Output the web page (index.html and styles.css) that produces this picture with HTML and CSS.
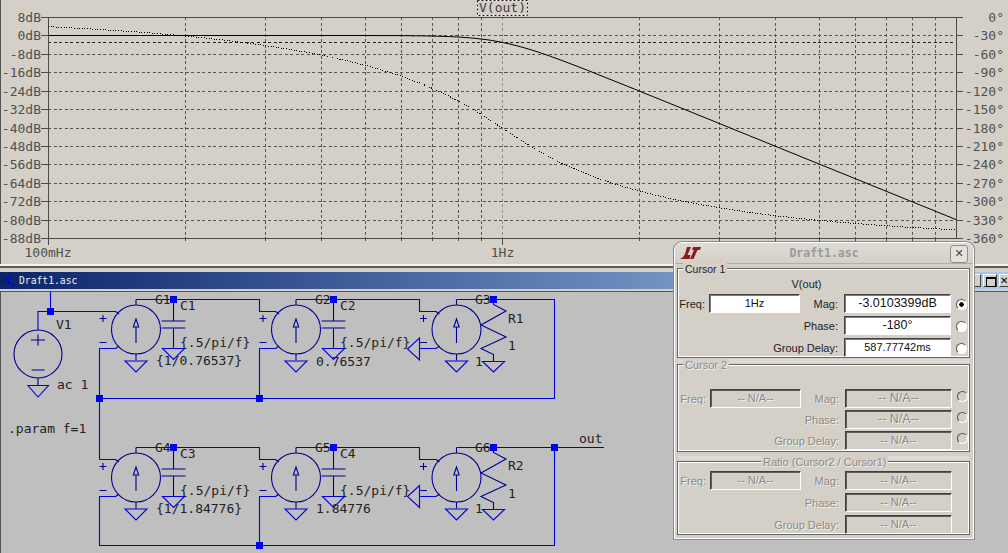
FILE: index.html
```html
<!DOCTYPE html>
<html lang="en">
<head>
<meta charset="utf-8">
<title>LTspice - Draft1.asc</title>
<link rel="stylesheet" href="styles.css">
<script src="plot.js" defer></script>
</head>
<body>
<main class="desktop">
  <section class="plot-pane">
    <svg class="pane-svg" width="1008" height="264" viewBox="0 0 1008 264">
      <path class="grid" d="M48 54.5H955M48 72.5H955M48 91.5H955M48 109.5H955M48 128.5H955M48 146.5H955M48 164.5H955M48 183.5H955M48 201.5H955M48 220.5H955M48 35.5H955"/>
      <path class="grid-cursor" d="M48 42.5H955"/>
      <path class="grid" d="M185.5 17V238M265.5 17V238M321.5 17V238M365.5 17V238M401.5 17V238M432.5 17V238M458.5 17V238M481.5 17V238M639.5 17V238M719.5 17V238M775.5 17V238M819.5 17V238M855.5 17V238M886.5 17V238M912.5 17V238M935.5 17V238"/>
      <path class="grid-light" d="M502.5 17V238"/>
      <path class="axis" d="M41 17.5H963M48.5 17V245M956.5 17V239M48 238.5H957M502.5 238V245M185.5 238V241M265.5 238V241M321.5 238V241M365.5 238V241M401.5 238V241M432.5 238V241M458.5 238V241M481.5 238V241M639.5 238V241M719.5 238V241M775.5 238V241M819.5 238V241M855.5 238V241M886.5 238V241M912.5 238V241M935.5 238V241"/>
      <path class="axis" d="M41 35.5H48M41 54.5H48M41 72.5H48M41 91.5H48M41 109.5H48M41 128.5H48M41 146.5H48M41 164.5H48M41 183.5H48M41 201.5H48M41 220.5H48M41 238.5H48M957 35.5H963M957 54.5H963M957 72.5H963M957 91.5H963M957 109.5H963M957 128.5H963M957 146.5H963M957 164.5H963M957 183.5H963M957 201.5H963M957 220.5H963M957 238.5H963"/>
      <path id="trace-phase" class="trace-phase" d=""/>
      <path id="trace-mag" class="trace-mag" d=""/>
      <g class="axis-left">
        <text x="41" y="22">8dB</text><text x="41" y="40">0dB</text><text x="41" y="59">-8dB</text><text x="41" y="77">-16dB</text><text x="41" y="96">-24dB</text><text x="41" y="114">-32dB</text><text x="41" y="133">-40dB</text><text x="41" y="151">-48dB</text><text x="41" y="169">-56dB</text><text x="41" y="188">-64dB</text><text x="41" y="206">-72dB</text><text x="41" y="225">-80dB</text><text x="41" y="243">-88dB</text>
      </g>
      <g class="axis-right">
        <text x="1004" y="22">0°</text><text x="1004" y="40">-30°</text><text x="1004" y="59">-60°</text><text x="1004" y="77">-90°</text><text x="1004" y="96">-120°</text><text x="1004" y="114">-150°</text><text x="1004" y="133">-180°</text><text x="1004" y="151">-210°</text><text x="1004" y="169">-240°</text><text x="1004" y="188">-270°</text><text x="1004" y="206">-300°</text><text x="1004" y="225">-330°</text><text x="1004" y="243">-360°</text>
      </g>
      <g class="axis-bottom">
        <text x="48" y="257">100mHz</text><text x="502.5" y="257">1Hz</text>
      </g>
      <rect class="title-box" x="477.5" y="0.5" width="50" height="15"/>
      <rect class="title-dots" x="477.5" y="0.5" width="50" height="15"/>
      <text class="plot-title" x="502.5" y="12">V(out)</text>
    </svg>
  </section>

  <div class="mdi-sep"></div>

  <header class="mdi-title">
    <svg class="mdi-icon" width="14" height="18" viewBox="0 0 14 18">
      <path class="mdi-icon-line" d="M10 1L6 6V14M1 9H6M6 9L12 5M6 11L12 15"/>
      <path class="mdi-icon-arrow" d="M9 14l4 2l-1-3z"/>
    </svg>
    <span class="mdi-name">Draft1.asc</span>
    <div class="mdi-buttons">
      <span class="mdi-btn"></span>
      <span class="mdi-btn mdi-btn-restore"></span>
      <span class="mdi-btn mdi-btn-close">✕</span>
    </div>
  </header>
  <div class="mdi-gap"></div>

  <section class="schematic">
    <svg class="pane-svg" width="1008" height="262" viewBox="0 291 1008 262">
      <defs>
        <g id="stage">
          <circle class="sym" cx="0" cy="30" r="24.5"/>
          <path class="sym" d="M0 0V5.5M0 54.5V61M0 43.5V27.5M-2.7 27.5L0 19.5L2.7 27.5ZM-20.5 12L-17 14.5M-20.5 49L-17 46.5M-36.5 19H-29.5M-33 15.5V22.5M-36.5 43H-29.5"/>
          <path class="wire" d="M-11 61.5H11L0 72.5Z"/>
        </g>
        <g id="cap">
          <path class="sym" d="M0 0V21.5M-12 21.5H12M-12 28.5H12M0 28.5V49"/>
          <path class="wire" d="M-11 49H11L0 60Z"/>
        </g>
        <g id="res">
          <path class="sym" d="M0 0V5L12.5 11.5L-12.5 25.5L12.5 37.5L-12.5 49L0 55V62"/>
          <path class="wire" d="M-11 62H11L0 72.5Z"/>
        </g>
        <path id="gnd-left" class="wire" d="M0 -11V11L-12 0Z"/>
        <rect id="dot" class="junction" x="-3.5" y="-3.5" width="7" height="7"/>
      </defs>

      <path class="wire" d="M50.5 292V311.5M38 330V311.5H116M136 299.5H259.5V311.5H276M99.5 459.5V348.5H116M259.5 398.5V348.5H276M99.5 398.5H554.5V299.5H456.5M296 299.5H419.5V311.5H436M419.5 348.5H436"/>
      <path class="wire" d="M136 447.5H259.5V459.5H276M296 447.5H419.5V459.5H436M456.5 447.5H604M554.5 447.5V545.5H99.5V496.5H116M259.5 545.5V496.5H276M419.5 496.5H436M99.5 459.5H116"/>

      <circle class="sym" cx="38" cy="354" r="24"/>
      <path class="sym" d="M31 340H45M38 334.5V345.5M31.5 370H44.5M38 378V385"/>
      <path class="wire" d="M28 385.5H48.5L38 397Z"/>

      <use href="#stage" x="136" y="299.5"/><use href="#stage" x="296" y="299.5"/><use href="#stage" x="456.5" y="299.5"/>
      <use href="#stage" x="136" y="447.5"/><use href="#stage" x="296" y="447.5"/><use href="#stage" x="456.5" y="447.5"/>
      <use href="#cap" x="173.5" y="299.5"/><use href="#cap" x="333.5" y="299.5"/>
      <use href="#cap" x="173.5" y="447.5"/><use href="#cap" x="333.5" y="447.5"/>
      <use href="#res" x="493.5" y="299.5"/><use href="#res" x="493.5" y="447.5"/>
      <use href="#gnd-left" x="419.5" y="349"/><use href="#gnd-left" x="419.5" y="496.5"/>

      <use href="#dot" x="50.5" y="311.5"/><use href="#dot" x="173.5" y="299.5"/><use href="#dot" x="333.5" y="299.5"/><use href="#dot" x="493.5" y="299.5"/>
      <use href="#dot" x="99.5" y="398.5"/><use href="#dot" x="259.5" y="398.5"/>
      <use href="#dot" x="173.5" y="447.5"/><use href="#dot" x="333.5" y="447.5"/><use href="#dot" x="493.5" y="447.5"/><use href="#dot" x="554.5" y="447.5"/>
      <use href="#dot" x="259.5" y="545.5"/>

      <g class="net-label">
        <text x="56" y="329">V1</text><text x="57" y="389">ac 1</text><text x="8" y="433">.param f=1</text>
        <text x="155" y="304">G1</text><text x="180" y="310">C1</text><text x="180" y="347">{.5/pi/f}</text><text x="156" y="365">{1/0.76537}</text>
        <text x="315" y="304">G2</text><text x="340" y="310">C2</text><text x="340" y="347">{.5/pi/f}</text><text x="316" y="366">0.76537</text>
        <text x="475" y="304">G3</text><text x="508" y="323">R1</text><text x="508" y="350">1</text><text x="475" y="366">1</text>
        <text x="155" y="452">G4</text><text x="180" y="458">C3</text><text x="180" y="495">{.5/pi/f}</text><text x="156" y="513">{1/1.84776}</text>
        <text x="315" y="452">G5</text><text x="340" y="458">C4</text><text x="340" y="495">{.5/pi/f}</text><text x="316" y="513">1.84776</text>
        <text x="475" y="452">G6</text><text x="508" y="470">R2</text><text x="508" y="498">1</text><text x="475" y="513">1</text>
        <text x="579" y="443">out</text>
      </g>
    </svg>
  </section>

  <aside class="dialog">
    <div class="dialog-title">
      <svg class="dialog-logo" width="22" height="14" viewBox="0 0 22 14">
        <path class="logo-shape" d="M7 1h4l-3.5 8h3l-1 4H0c2.5-1 4-3 5-5zM13 1h8l-1 3h-2.5l-4 9h-3.5l4-9H12z"/>
      </svg>
      <span class="dialog-name">Draft1.asc</span>
      <span class="dialog-close">✕</span>
    </div>

    <div class="group group-c1">
      <span class="legend legend-left">Cursor 1</span>
      <div class="trace-name">V(out)</div>
      <div class="rows">
        <span class="lbl lbl-freq">Freq:</span><div class="field">1Hz</div><span class="lbl lbl-mag">Mag:</span><div class="field field-lg">-3.0103399dB</div><span class="radio radio-on"></span>
        <span class="lbl lbl-wide">Phase:</span><div class="field field-lg">-180°</div><span class="radio radio-live"></span>
        <span class="lbl lbl-wide">Group Delay:</span><div class="field">587.77742ms</div><span class="radio radio-live"></span>
      </div>
    </div>

    <div class="group group-c2 off">
      <span class="legend legend-left">Cursor 2</span>
      <div class="rows rows-tight">
        <span class="lbl lbl-freq">Freq:</span><div class="field">-- N/A--</div><span class="lbl lbl-mag">Mag:</span><div class="field field-lg">-- N/A--</div><span class="radio"></span>
        <span class="lbl lbl-wide">Phase:</span><div class="field field-lg">-- N/A--</div><span class="radio"></span>
        <span class="lbl lbl-wide">Group Delay:</span><div class="field">-- N/A--</div><span class="radio"></span>
      </div>
    </div>

    <div class="group group-ratio off">
      <span class="legend legend-ratio">Ratio (Cursor2 / Cursor1)</span>
      <div class="rows">
        <span class="lbl lbl-freq">Freq:</span><div class="field">-- N/A--</div><span class="lbl lbl-mag">Mag:</span><div class="field">-- N/A--</div><span class="radio-none"></span>
        <span class="lbl lbl-wide">Phase:</span><div class="field">-- N/A--</div><span class="radio-none"></span>
        <span class="lbl lbl-wide">Group Delay:</span><div class="field">-- N/A--</div><span class="radio-none"></span>
      </div>
    </div>
  </aside>
</main>
</body>
</html>
```
FILE: styles.css
```css
* { box-sizing: border-box; }
html, body { margin: 0; padding: 0; }
body { width: 1008px; height: 553px; overflow: hidden; background: #bfbfbf; }

.desktop {
  position: relative;
  width: 1008px;
  height: 553px;
  overflow: hidden;
  display: flex;
  flex-direction: column;
  background: #bfbfbf;
}
.pane-svg { display: block; }

/* Plot pane */
.plot-pane { height: 264px; background: #d4d0c8; box-shadow: inset 1px 0 0 #555; }
.grid, .grid-cursor, .grid-light, .axis, .trace-phase { fill: none; shape-rendering: crispEdges; }
.grid { stroke: #555; stroke-width: 1; stroke-dasharray: 3 2.5; }
.grid-cursor { stroke: #222; stroke-width: 1; stroke-dasharray: 3 2.5; }
.grid-light { stroke: #8f8d88; stroke-width: 1; stroke-dasharray: 3 2.5; }
.axis { stroke: #4a4a4a; stroke-width: 1; }
.trace-mag { fill: none; stroke: #000; stroke-width: 1; }
.trace-phase { stroke: #000; stroke-width: 1; stroke-dasharray: 1 1.6; }
.axis-left text, .axis-right text, .axis-bottom text, .plot-title {
  font-family: "DejaVu Sans Mono", monospace;
  font-size: 13px;
  fill: #505050;
}
.axis-left text, .axis-right text { text-anchor: end; }
.axis-bottom text, .plot-title { text-anchor: middle; }
.plot-title { fill: #3c3c3c; }
.title-box { fill: #d4d0c8; stroke: #fff; stroke-width: 1; }
.title-dots { fill: none; stroke: #111; stroke-width: 1; stroke-dasharray: 2 2; }

/* MDI child frame */
.mdi-sep {
  height: 8px;
  background: #d4d0c8;
  border-top: 1px solid #f4f3f0;
  box-shadow: inset 0 2px 0 -0.5px #f4f3f0;
  position: relative;
}
.mdi-sep::after {
  content: "";
  display: block;
  height: 2px;
  margin-top: 1px;
  background: #5c5c5c;
}
.mdi-title {
  height: 17px;
  display: flex;
  align-items: center;
  background: linear-gradient(90deg, #0a246a 0%, #a6caf0 100%);
  position: relative;
}
.mdi-icon { margin-left: 2px; flex: none; position: relative; top: -1px; }
.mdi-icon-line { fill: none; stroke: #0000e0; stroke-width: 1; }
.mdi-icon-arrow { fill: #0000e0; }
.mdi-name {
  margin-left: 3px;
  font-family: "DejaVu Sans Mono", monospace;
  font-size: 9.7px;
  color: #f0f0f0;
}
.mdi-buttons { margin-left: auto; margin-right: -5px; display: flex; gap: 2px; }
.mdi-btn {
  width: 14px;
  height: 13px;
  background: #d4d0c8;
  border: 1px solid;
  border-color: #fff #404040 #404040 #fff;
  position: relative;
  font: 10px/11px "DejaVu Sans", sans-serif;
  color: #000;
  text-align: center;
}
.mdi-btn-restore::after {
  content: "";
  position: absolute;
  left: 2px; top: 2px;
  width: 8px; height: 7px;
  border: 1px solid #000;
  border-top-width: 2px;
}
.mdi-btn-close { font-weight: bold; text-align: left; }
.mdi-gap { height: 2px; background: #d4d0c8; }

/* Schematic */
.schematic { flex: 1; background: #bfbfbf; box-shadow: inset 1px 1px 0 #555; }
.wire { fill: none; stroke: #0000e0; stroke-width: 1.1; }
.sym { fill: none; stroke: #000090; stroke-width: 1.1; }
.junction { fill: #0000f0; }
.net-label text {
  font-family: "DejaVu Sans Mono", monospace;
  font-size: 13px;
  fill: #222;
}

/* Cursor dialog */
.dialog {
  position: absolute;
  left: 674px;
  top: 242px;
  width: 300px;
  height: 297px;
  background: #d4d0c8;
  border: 1px solid #fff;
  border-radius: 8px 8px 0 0;
  box-shadow: 0 0 0 1px #8a8a88;
  font-family: "Liberation Sans", Arial, sans-serif;
  font-size: 11px;
  color: #222;
  padding: 0 2px;
}
.dialog-title {
  height: 21px;
  margin: 0 -2px 4px;
  padding: 0 5px;
  display: flex;
  align-items: center;
  position: relative;
  border-bottom: 1px solid #b0aea8;
  border-radius: 8px 8px 0 0;
  background: linear-gradient(180deg, #dedbd5, #d4d0c8);
}
.dialog-logo { flex: none; }
.logo-shape { fill: #8e1a1a; }
.dialog-name {
  position: absolute;
  left: 0; right: 0;
  text-align: center;
  font-family: "DejaVu Sans Mono", monospace;
  font-weight: bold;
  font-size: 11.5px;
  color: #9a9a9a;
}
.dialog-close {
  position: absolute;
  right: 5px;
  top: 2px;
  width: 18px;
  height: 18px;
  background: #e4e2dd;
  border: 1px solid #8f8d88;
  border-radius: 3px;
  font: bold 11px/16px "DejaVu Sans", sans-serif;
  color: #444;
  text-align: center;
}

.group {
  position: relative;
  width: 293px;
  border: 1px solid #666;
  box-shadow: inset 0 0 0 1px #fff;
}
.group + .group::before {
  content: "";
  position: absolute;
  left: 0; right: 0;
  top: -6px;
  height: 4px;
  background: #dedbd5;
}
.group-c1 { height: 90px; padding-top: 9px; }
.group-c2 { height: 88px; margin-top: 6px; padding-top: 24px; padding-left: 1px; }
.group-ratio { height: 74px; margin-top: 9px; padding-top: 9px; padding-left: 1px; }
.legend {
  position: absolute;
  top: -6px;
  background: #d4d0c8;
  padding: 0 2px;
  line-height: 12px;
  white-space: nowrap;
}
.legend-left { left: 5px; }
.group-c1 .legend { font-size: 10.5px; }
.legend-ratio { left: 83px; }
.trace-name { height: 16px; line-height: 13px; text-align: center; padding-right: 34px; }

.rows {
  display: grid;
  grid-template-columns: 31px 91px 44px 107px 18px;
  grid-auto-rows: 19px;
  row-gap: 3px;
}
.rows-tight { row-gap: 2px; }
.lbl { text-align: right; line-height: 21px; white-space: nowrap; }
.lbl-freq { padding-right: 4px; }
.lbl-mag { padding-right: 6px; }
.lbl-wide { grid-column: 1 / span 3; padding-right: 6px; }
.field {
  background: #fff;
  border: 1px solid;
  border-color: #404040 #fff #fff #404040;
  box-shadow: inset 1px 1px 0 #808080;
  text-align: center;
  line-height: 16px;
  font-size: 11px;
  color: #111;
}
.field-lg { font-size: 12.5px; }
.radio {
  justify-self: end;
  align-self: center;
  width: 11px;
  height: 11px;
  margin-right: 2px;
  border-radius: 50%;
  border: 1.5px solid;
  border-color: #555 #fff #fff #555;
}
.group-c1 .radio { margin-top: 2px; }
.group-c2 .radio { margin-bottom: 4px; }
.radio-live, .radio-on { background: #fff; }
.radio-on { background: radial-gradient(circle, #000 0 2px, #fff 2.5px); }
.off .lbl, .off .legend, .off .field {
  color: #8a8a86;
  text-shadow: 1px 1px 0 rgba(255, 255, 255, 0.7);
}
.off .field { background: #d4d0c8; box-shadow: inset 1px 1px 0 #5c5c5c; }
```
FILE: plot.js
```js
// Fourth-order Butterworth response drawn on the plot's log-frequency axis.
function buildTraces() {
  var mag = [];
  var phase = [];
  for (var x = 48; x <= 956; x += 2) {
    var w = Math.pow(10, (x - 502.5) / 454.5);
    var dB = -10 * Math.log10(1 + Math.pow(w, 8));
    var re = 1 - w * w;
    var deg = (Math.atan2(0.76537 * w, re) + Math.atan2(1.84776 * w, re)) * 180 / Math.PI;
    mag.push(x + " " + (35.5 - 2.306 * dB).toFixed(1));
    phase.push(x + " " + (17.5 + 0.6153 * deg).toFixed(1));
  }
  document.getElementById("trace-mag").setAttribute("d", "M" + mag.join("L"));
  document.getElementById("trace-phase").setAttribute("d", "M" + phase.join("L"));
}
buildTraces();
```
